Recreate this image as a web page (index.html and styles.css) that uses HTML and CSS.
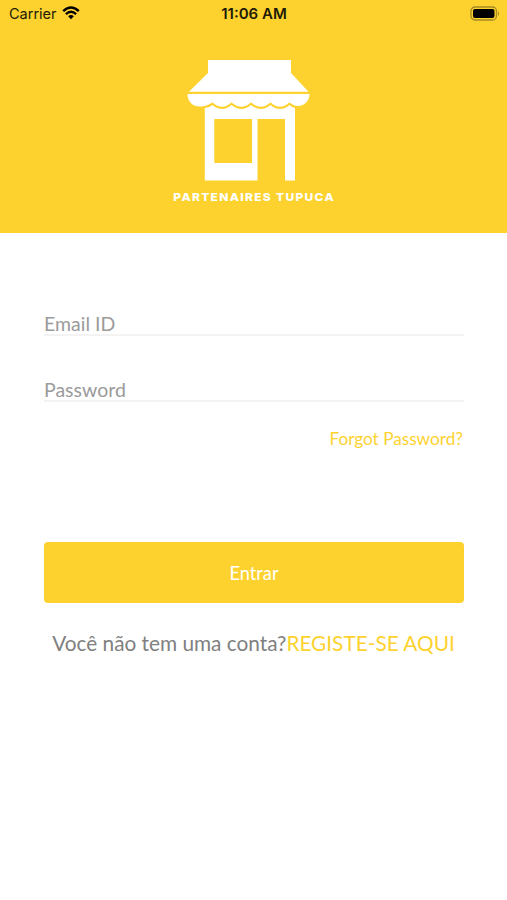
FILE: index.html
```html
<!DOCTYPE html>
<html lang="pt">
<head>
    <meta charset="UTF-8">
    <meta name="viewport" content="width=device-width, initial-scale=1.0">
    <title>Partenaires Tupuca</title>
    <link rel="stylesheet" href="styles.css">
</head>
<body>

    <header class="header">
        <div class="status-bar">
            <div class="carrier">
                <span>Carrier</span>
                <svg class="wifi" viewBox="0 0 18 14" width="18" height="14">
                    <path d="M1.2 5.1 Q9 -2.3 16.8 5.1" />
                    <path d="M3.9 8.1 Q9 3.3 14.1 8.1" />
                    <path class="dot" d="M6.1 10.3 Q9 7.9 11.9 10.3 L9 13.2 Z" />
                </svg>
            </div>
            <div class="time">11:06 AM</div>
            <svg class="battery" viewBox="0 0 31 15" width="31" height="15">
                <rect class="case" x="1" y="1" width="25.5" height="13" rx="4" />
                <rect x="3" y="3" width="21.5" height="9" rx="2" />
                <path class="tip" d="M28 5 Q30.2 7.5 28 10 Z" />
            </svg>
        </div>

        <svg class="shop" viewBox="0 0 124 122" width="124" height="122">
            <path d="M22 0 H105 V13 L122.5 31.7 H3 L22 13 Z" />
            <path d="M1.500 34 H123.500 C123.500 40 119 46 112 46 Q108 46 103.500 42.500 Q94 51 84.500 42.500 Q75 51 65 42.500 Q55.500 51 45.500 42.500 Q36 51 26.500 42.500 Q20 46.500 14.500 46.500 C5 46.500 1.500 40 1.500 34 Z" />
            <path fill-rule="evenodd" d="M18.800 48 Q23 48 26.500 45 Q36 53 45.500 45 Q55.500 53 65 45 Q75 53 84.500 45 Q94 53 103.500 45 Q106 47.500 109 48 V120.500 H99 V59 H71.500 V120.500 H18.800 Z M28.300 59 V103 H66 V59 Z" />
        </svg>
        <div class="brand">PARTENAIRES TUPUCA</div>
    </header>

    <form class="login">
        <input class="field" type="text" placeholder="Email ID" aria-label="Email ID">
        <input class="field" type="password" placeholder="Password" aria-label="Password">
        <a class="forgot" href="#">Forgot Password?</a>
        <button class="submit" type="button">Entrar</button>
        <p class="register">Você não tem uma conta?<a href="#">REGISTE-SE AQUI</a></p>
    </form>

</body>
</html>
```

FILE: styles.css
```css
* {
    box-sizing: border-box;
}
body {
    margin: 0;
    font-family: Lato, sans-serif;
    background-color: #fff;
}
a {
    color: #fdd22f;
    text-decoration: none;
}
.header {
    display: flex;
    flex-direction: column;
    align-items: center;
    height: 233px;
    background-color: #fdd22f;
}
.status-bar {
    display: grid;
    grid-template-columns: 1fr auto 1fr;
    align-items: center;
    width: 100%;
    height: 27px;
    padding: 0 6px 0 9px;
    font-family: Inter, sans-serif;
    font-size: 14.5px;
    color: #211b06;
}
.carrier {
    display: flex;
    align-items: center;
    gap: 5px;
}
.wifi {
    fill: none;
    stroke: #000;
    stroke-width: 2.4;
    margin-top: -2px;
}
.wifi .dot {
    fill: #000;
    stroke: none;
}
.time {
    margin-right: 2px;
    font-size: 15px;
    font-weight: 600;
}
.battery {
    justify-self: end;
    margin-top: -1px;
}
.battery .case {
    fill: none;
    stroke: #a58a24;
    stroke-width: 1.3;
}
.battery .tip {
    fill: #a58a24;
}
.shop {
    margin: 33px 0 0 -11px;
    fill: #fff;
}
.brand {
    margin: 8px 0 0 2px;
    font-family: Inter, sans-serif;
    font-size: 11px;
    font-weight: 800;
    line-height: 14px;
    letter-spacing: 1.2px;
    transform: scaleX(1.09);
    color: #fff;
}
.login {
    display: flex;
    flex-direction: column;
    padding: 76px 43px 0 44px;
}
.field {
    height: 27px;
    margin-bottom: 39px;
    padding: 4px 0 0;
    border: none;
    border-bottom: 2px solid #f3f3f3;
    font-family: inherit;
    font-size: 19.5px;
    line-height: 21px;
    background: none;
    outline: none;
}
.field::placeholder {
    color: #9b9b9b;
    opacity: 1;
}
.forgot {
    align-self: flex-end;
    margin: -13px 1px 0 0;
    font-size: 17.2px;
    line-height: 22px;
}
.submit {
    height: 61px;
    margin-top: 92px;
    border: none;
    border-radius: 4px;
    font-family: inherit;
    font-size: 18.3px;
    color: #fff;
    background-color: #fdd22f;
    cursor: pointer;
}
.register {
    margin: 27px 1px 0 0;
    font-size: 20.8px;
    line-height: 26px;
    text-align: center;
    white-space: nowrap;
    color: #808080;
}
```
